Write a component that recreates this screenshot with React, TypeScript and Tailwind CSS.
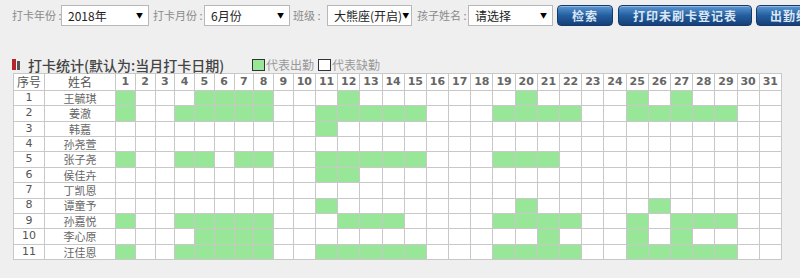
const range = (a: number, b: number) => Array.from({ length: b - a + 1 }, (_, i) => a + i);

const days = range(1, 31);

const rows: { name: string; on: number[] }[] = [
  { name: '王毓琪', on: [1, 5, 6, 7, 8, 12, 20, 25, 27] },
  { name: '姜澈', on: [1, ...range(4, 8), ...range(11, 15), ...range(19, 22), ...range(25, 29)] },
  { name: '韩嘉', on: [11] },
  { name: '孙尧萱', on: [] },
  { name: '张子尧', on: [1, 4, 5, 7, 8, ...range(11, 15), 19, 20, 21] },
  { name: '侯佳卉', on: [11, 12] },
  { name: '丁凯恩', on: [] },
  { name: '谭童予', on: [11, 20, 26] },
  { name: '孙嘉悦', on: [1, ...range(4, 8), 12, 13, 14, ...range(19, 22), 25, 27, 28, 29] },
  { name: '李心原', on: [5, 6, 7, 8, 21, 25, 27] },
  { name: '汪佳恩', on: [1, ...range(4, 8), ...range(11, 15), ...range(19, 22), ...range(25, 29)] },
];

function Select({ className, value }: { className: string; value: string }) {
  return (
    <div
      className={`${className} h-[21px] shrink-0 bg-white border border-[#b8b8b8] flex items-center justify-between pl-[6px] pr-[5px] text-[12px] text-[#222] whitespace-nowrap overflow-hidden`}
    >
      <span>{value}</span>
      <span className="text-[7px] text-black">▼</span>
    </div>
  );
}

function Button({ className, label }: { className: string; label: string }) {
  return (
    <div
      className={`${className} h-[21px] shrink-0 rounded-[4px] border border-[#17386a] bg-linear-to-b from-[#5b97d3] via-[#235f9f] to-[#173f78] shadow-[inset_0_1px_0_rgba(255,255,255,0.35)] flex items-center justify-center text-[12px] font-bold tracking-[1px] text-[#dbe6f4] whitespace-nowrap overflow-hidden`}
    >
      {label}
    </div>
  );
}

const label = 'text-[11px] text-[#8a8a8a] whitespace-nowrap shrink-0';
const cell = 'border-r border-b border-[#c8c8c8] flex items-center justify-center';

export default function App() {
  return (
    <div className="w-[800px] h-[278px] overflow-hidden bg-[#efefef] font-['Noto_Sans_CJK_SC',sans-serif]">
      {/* Toolbar */}
      <div className="flex items-center pt-[5px] pl-[12px]">
        <span className={`${label} w-[49px]`}>打卡年份 :</span>
        <Select className="w-[88px]" value="2018年" />
        <span className={`${label} w-[51px] ml-[4px]`}>打卡月份 :</span>
        <Select className="w-[86px]" value="6月份" />
        <span className={`${label} w-[34px] ml-[3px]`}>班级 :</span>
        <Select className="w-[85px]" value="大熊座(开启)" />
        <span className={`${label} w-[51px] ml-[5px]`}>孩子姓名 :</span>
        <Select className="w-[85px]" value="请选择" />
        <Button className="w-[56px] ml-[4px]" label="检索" />
        <Button className="w-[134px] ml-[5px]" label="打印未刷卡登记表" />
        <Button className="w-[80px] ml-[4px]" label="出勤统计" />
      </div>

      {/* Title + legend */}
      <div className="flex items-center h-[17px] mt-[30px] pl-[12px]">
        <span className="w-[4px] h-[11px] bg-[#b3262b]" />
        <span className="w-[3px] h-[9px] bg-[#555] ml-[1px] mt-[2px]" />
        <span className="ml-[8px] text-[14px] font-medium leading-none text-[#444] whitespace-nowrap w-[224px]">
          打卡统计(默认为:当月打卡日期)
        </span>
        <span className="w-[13px] h-[12px] bg-[#98e698] border border-[#333]" />
        <span className="text-[12px] text-[#999] ml-[1px] w-[52px]">代表出勤</span>
        <span className="w-[13px] h-[12px] bg-white border border-[#333]" />
        <span className="text-[12px] text-[#999] ml-[1px]">代表缺勤</span>
      </div>

      {/* Table */}
      <div className="ml-[13px] border-l border-t border-[#c8c8c8] grid w-max grid-cols-[31px_71px_repeat(9,19.75px)_repeat(22,22.2px)] grid-rows-[17px_repeat(11,15.36px)] bg-white">
        <div className={`${cell} text-[12px] text-[#555]`}>序号</div>
        <div className={`${cell} text-[12px] text-[#555]`}>姓名</div>
        {days.map((d) => (
          <div
            key={d}
            className={`${cell} font-['DejaVu_Sans',sans-serif] font-bold text-[11px] text-[#666]`}
          >
            {d}
          </div>
        ))}
        {rows.map((r, i) => (
          <div key={r.name} className="contents">
            <div className={`${cell} font-['DejaVu_Sans',sans-serif] text-[11px] text-[#555]`}>{i + 1}</div>
            <div className={`${cell} text-[11px] text-[#666]`}>{r.name}</div>
            {days.map((d) => (
              <div
                key={d}
                className={`${cell} ${r.on.includes(d) ? 'bg-[#98e698]' : 'bg-white'}`}
              />
            ))}
          </div>
        ))}
      </div>
    </div>
  );
}
